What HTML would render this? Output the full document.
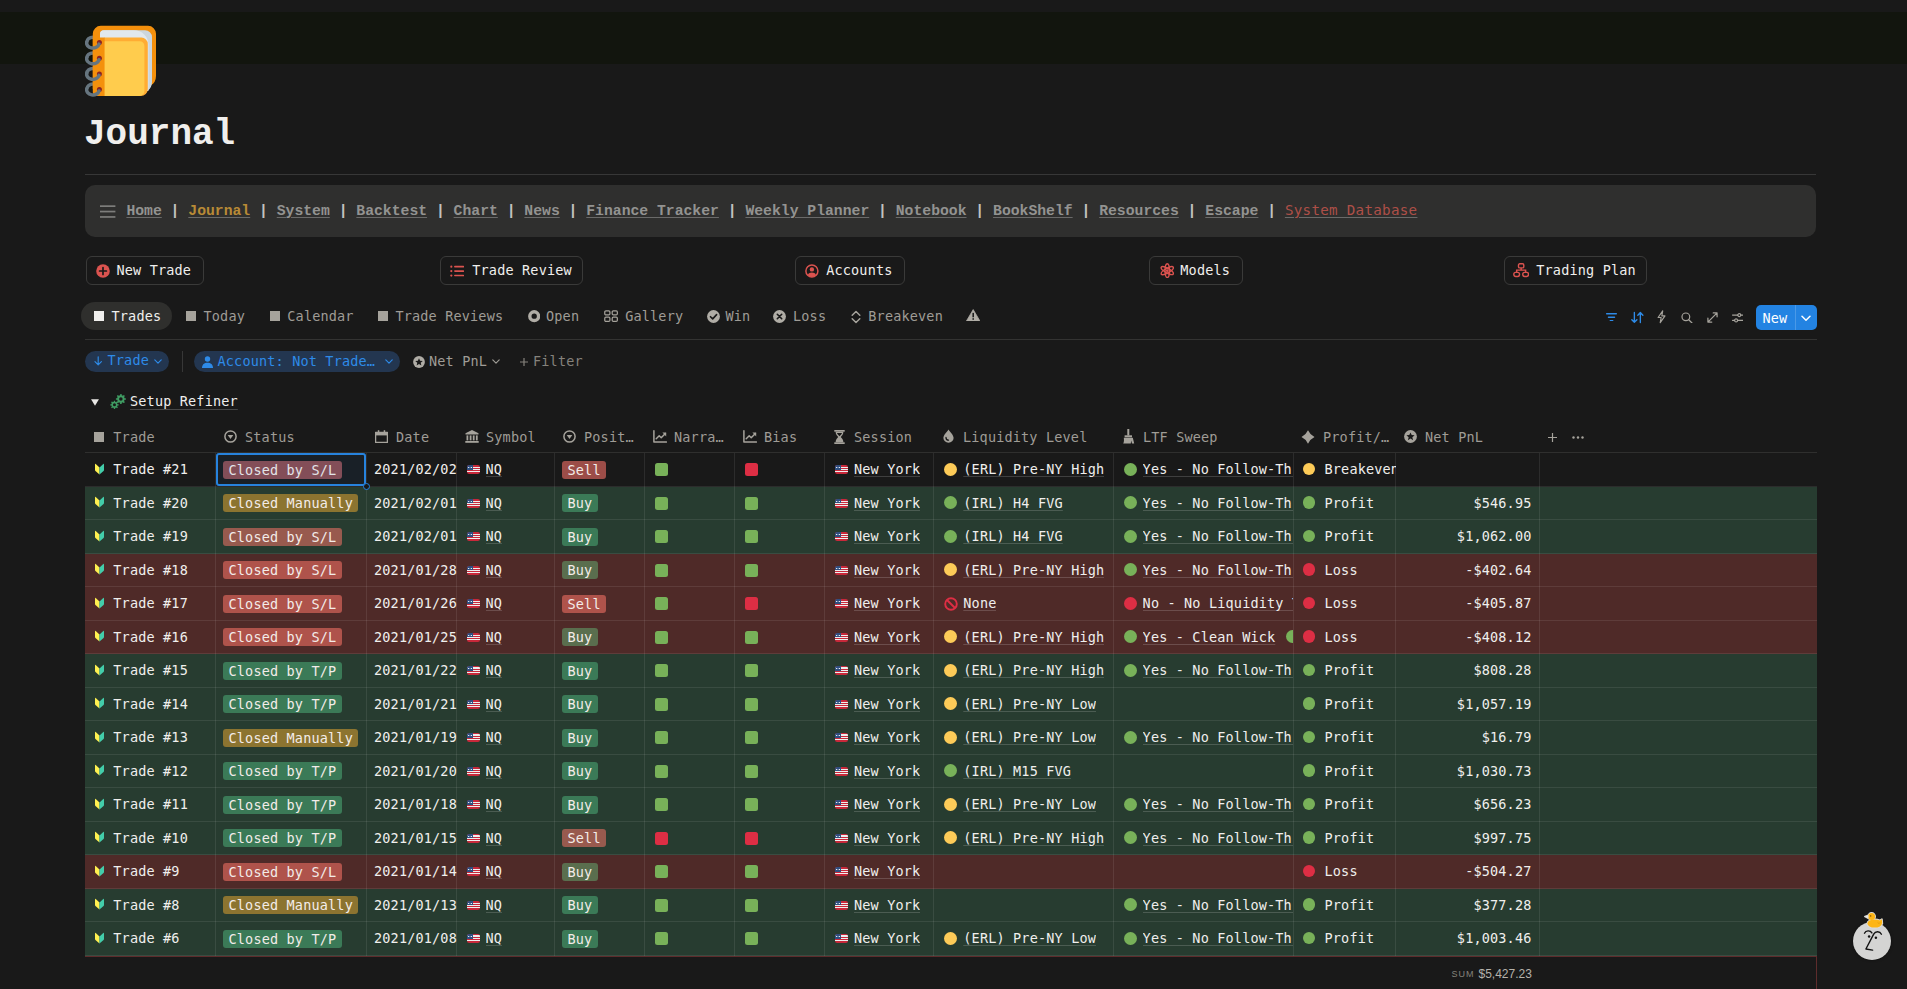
<!DOCTYPE html>
<html lang="en"><head><meta charset="utf-8"><title>Journal</title>
<style>
*{box-sizing:border-box}
html,body{margin:0;padding:0}
body{width:1907px;height:989px;overflow:hidden;position:relative;background:#191919;color:#f0efed;font-family:'DejaVu Sans Mono','Liberation Mono',monospace;font-size:13.5px;line-height:20px;letter-spacing:0.167px}
.abs{position:absolute}
.t{position:absolute;white-space:nowrap;line-height:20px;height:20px}
.cover{left:0;top:12px;width:1907px;height:52px;background:#12150e}
.title{left:84px;top:113px;font-family:'Liberation Mono','DejaVu Sans Mono',monospace;font-weight:bold;font-size:36px;letter-spacing:0;line-height:44px;height:44px;color:#f0efed}
.hr{left:85px;top:174px;width:1731px;height:1px;background:#373737}
.nav{left:85px;top:185px;width:1731px;height:52px;background:#2f2f2e;border-radius:10px}
.navt{left:126.4px;top:199.8px;font-family:'Liberation Mono','DejaVu Sans Mono',monospace;font-weight:bold;font-size:14.742px;letter-spacing:0;color:#c2c2c0}
.navt a{color:#939391;text-decoration:underline;text-decoration-thickness:1px;text-underline-offset:1.8px;text-decoration-color:#6a6a69}
.navt a.y{color:#b88a36}
.navt a.r{color:#ae4f48;font-weight:normal;font-family:'DejaVu Sans Mono','Liberation Mono',monospace;font-size:14.2px;letter-spacing:0.294px}
.btn{position:absolute;top:256px;height:28.5px;border:1px solid #3a3a39;border-radius:6px}
.btn svg{position:absolute;left:10px;top:6px;width:14px;height:14px}
.btn span{position:absolute;left:30.3px;top:2.8px;line-height:20px;white-space:nowrap}
.g{color:#9f9c96}
.tabpill{left:81px;top:302px;width:91px;height:28px;border-radius:14px;background:#2f2f2d}
.line{position:absolute;height:1px;background:#333332}
.pillb{position:absolute;top:351px;height:21px;border-radius:10.5px;background:#233650}
.blue{color:#2e8be8}
.th{color:#9f9c96}
.row{position:absolute;left:85px;width:1731.5px;height:33.5px}
.row.gr{background:#273c30}
.row.rd{background:#4f2a28}
.row .hb{position:absolute;left:0;right:0;bottom:0;height:1px;background:rgba(255,255,255,0.085)}
.vl{position:absolute;top:453px;width:1px;height:503px;background:rgba(255,255,255,0.085)}
.c{position:absolute;top:6.2px;line-height:20px;height:20px;white-space:nowrap;overflow:hidden}
.u{text-decoration:underline;text-decoration-color:rgba(255,255,255,0.17);text-decoration-thickness:1px;text-underline-offset:1.5px}
.tag{position:absolute;top:7.9px;height:18px;line-height:18px;border-radius:3px;padding:0 5.5px;white-space:nowrap;color:#f3ece9}
.tag i{font-style:normal;position:relative;top:0px}
.sq{position:absolute;top:10px;width:13px;height:13px;border-radius:2.5px}
.dot{position:absolute;top:9.6px;width:13.2px;height:13.2px;border-radius:50%}
.dot.p{width:12.5px;height:12.5px;top:9.8px}
.G{background:#78b159} .R{background:#dd2e44} .Y{background:#fdcb58}
.ico{position:absolute}
.fl{position:absolute;top:12px;width:13.2px;height:9px;border-radius:2.2px;overflow:hidden;background:linear-gradient(#c8283a 0 1.5px,#eee 1.5px 2.7px,#c8283a 2.7px 4px,#eee 4px 5px,#c8283a 5px 6.1px,#eee 6.1px 7.3px,#c8283a 7.3px 9px)}
.fl b{position:absolute;left:0;top:0;width:6.3px;height:4.9px;background:radial-gradient(circle at 1.85px 2.4px,#e8e8f0 0 .55px,transparent .7px),radial-gradient(circle at 4.15px 2.4px,#e8e8f0 0 .55px,transparent .7px),#2f4f80}
</style></head>
<body>
<div class="abs cover"></div>
<svg class="abs" style="left:85px;top:25px" width="72" height="72" viewBox="0 0 36 36">
<g fill="none" stroke="#66757F" stroke-width="1.750"><path d="M5 6.10H4A3.1 2.5 0 0 0 .9 8.60"/><path d="M5 13.95H4A3.1 2.5 0 0 0 .9 16.45"/><path d="M5 21.75H4A3.1 2.5 0 0 0 .9 24.25"/><path d="M5 29.55H4A3.1 2.5 0 0 0 .9 32.05"/></g>
<path fill="#F4900C" d="M7.900.400H31.500a4 4 0 0 1 4 4V25.500c0 2.300-1 3.700-2.500 4.600L28 32H3.900V4.400a4 4 0 0 1 4-4z"/>
<path fill="#CCD6DD" d="M9.500 2.600H30a3.500 3.500 0 0 1 3.500 3.500V28.500c0 2-.8 3.300-2 4.200L28 34H7.500V4.600a2 2 0 0 1 2-2z"/>
<path fill="#E1E8ED" d="M9.500 2.600H24.500a7.200 7.200 0 0 1 7.200 7.200V33H7.500V4.600a2 2 0 0 1 2-2z"/>
<path fill="#F4900C" d="M3.900 6.300H10V35.500H5.900a2 2 0 0 1-2-2z"/>
<path fill="#FFAC33" d="M9.840 6.300H28.200a3.200 3.200 0 0 1 3.200 3.200V32a3.500 3.500 0 0 1-3.500 3.500H9.840z"/>
<path fill="#FFCC4D" d="M9.840 8.100H27.300a2.400 2.400 0 0 1 2.400 2.400V33a2.500 2.500 0 0 1-2.500 2.500H9.840z"/>
<g fill="#8A2424"><circle cx="7.2" cy="8.80" r="1.25"/><circle cx="7.2" cy="16.65" r="1.25"/><circle cx="7.2" cy="24.45" r="1.25"/><circle cx="7.2" cy="32.25" r="1.25"/></g>
<g fill="none" stroke="#66757F" stroke-width="1.750" stroke-linecap="round"><path d="M.9 8.50A3.1 2.5 0 0 0 7 9.55"/><path d="M.9 16.35A3.1 2.5 0 0 0 7 17.40"/><path d="M.9 24.15A3.1 2.5 0 0 0 7 25.20"/><path d="M.9 31.95A3.1 2.5 0 0 0 7 33.00"/></g>
</svg>
<div class="t title">Journal</div>
<div class="abs hr"></div>
<div class="abs nav"></div>
<svg class="abs" style="left:99.7px;top:204px" width="17" height="15" viewBox="0 0 17 15"><g fill="#7d7d7b"><rect x="0" y="1.3" width="15.4" height="1.7"/><rect x="0" y="6.7" width="15.4" height="1.7"/><rect x="0" y="12.1" width="15.4" height="1.7"/></g></svg>
<div class="t navt"><a>Home</a> | <a class="y">Journal</a> | <a>System</a> | <a>Backtest</a> | <a>Chart</a> | <a>News</a> | <a>Finance Tracker</a> | <a>Weekly Planner</a> | <a>Notebook</a> | <a>BookShelf</a> | <a>Resources</a> | <a>Escape</a> | <a class="r">System Database</a></div>
<div class="btn" style="left:86.1px;width:117.8px"><svg style="left:9.0px;top:6.9px;width:14px;height:auto" viewBox="0 0 14 14"><circle cx="7" cy="7" r="6.8" fill="#db534f"/><path d="M7 3.6v6.8M3.6 7h6.8" stroke="#191919" stroke-width="1.7" stroke-linecap="round"/></svg><span style="left:29.4px">New Trade</span></div>
<div class="btn" style="left:439.7px;width:142.9px"><svg style="left:9.2px;top:6.9px;width:14.2px;height:auto" viewBox="0 0 14 14"><g fill="#db534f"><circle cx="1.3" cy="2.6" r="1.1"/><circle cx="1.3" cy="7" r="1.1"/><circle cx="1.3" cy="11.4" r="1.1"/><rect x="4" y="1.8" width="10" height="1.6" rx=".8"/><rect x="4" y="6.2" width="10" height="1.6" rx=".8"/><rect x="4" y="10.6" width="10" height="1.6" rx=".8"/></g></svg><span style="left:31.6px">Trade Review</span></div>
<div class="btn" style="left:795px;width:110px"><svg style="left:9.2px;top:6.9px;width:13.8px;height:auto" viewBox="0 0 14 14"><circle cx="7" cy="7" r="6.1" fill="none" stroke="#db534f" stroke-width="1.5"/><circle cx="7" cy="5.5" r="2.2" fill="#db534f"/><path d="M2.8 11.2C3.6 9.3 5.1 8.6 7 8.600s3.400.7 4.200 2.600C10.100 12.500 8.600 13.100 7 13.100S3.900 12.500 2.800 11.200z" fill="#db534f"/></svg><span style="left:30.2px">Accounts</span></div>
<div class="btn" style="left:1149px;width:94.1px"><svg style="left:9.7px;top:6.1px;width:14.5px;height:auto" viewBox="-.5 -.9 15 15.8"><g fill="none" stroke="#db534f" stroke-width="1.5"><ellipse cx="7" cy="7" rx="2.3" ry="7.1"/><ellipse cx="7" cy="7" rx="2.3" ry="7.1" transform="rotate(60 7 7)"/><ellipse cx="7" cy="7" rx="2.3" ry="7.1" transform="rotate(-60 7 7)"/></g><circle cx="7" cy="7" r="1.4" fill="#db534f"/></svg><span style="left:30.3px">Models</span></div>
<div class="btn" style="left:1504.2px;width:142.4px"><svg style="left:7.7px;top:6.4px;width:16.3px;height:auto" viewBox="0 0 16 14"><g fill="none" stroke="#db534f" stroke-width="1.4"><rect x="5.4" y="0.8" width="5.2" height="4" rx="1.2"/><rect x="0.8" y="9.2" width="5.6" height="4" rx="1.8"/><rect x="9.6" y="9.2" width="5.6" height="4" rx="1.8"/><path d="M8 4.800V7M3.600 9.200V7h8.800v2.200"/></g></svg><span style="left:31.1px">Trading Plan</span></div>
<div class="abs tabpill"></div>
<div class="abs" style="left:94px;top:311px;width:10.3px;height:10.3px;background:#f0efed"></div>
<div class="t" style="left:111.5px;top:306.2px;color:#f0efed">Trades</div>
<div class="abs" style="left:185.7px;top:311px;width:10.3px;height:10.3px;background:#a6a39c"></div>
<div class="t g" style="left:203.5px;top:306.2px">Today</div>
<div class="abs" style="left:269.6px;top:311px;width:10.3px;height:10.3px;background:#a6a39c"></div>
<div class="t g" style="left:287.3px;top:306.2px">Calendar</div>
<div class="abs" style="left:377.8px;top:311px;width:10.3px;height:10.3px;background:#a6a39c"></div>
<div class="t g" style="left:395.4px;top:306.2px">Trade Reviews</div>
<svg class="abs" style="left:527.5px;top:310.3px" width="12.4" height="12.4" viewBox="0 0 13 13"><circle cx="6.5" cy="6.5" r="4.6" fill="none" stroke="#b0ada6" stroke-width="3.6"/></svg>
<div class="t g" style="left:546px;top:306.2px">Open</div>
<svg class="abs" style="left:603.7px;top:310.4px" width="14.3" height="12.4" viewBox="0 0 15 13"><g fill="none" stroke="#a6a39c" stroke-width="1.3"><rect x=".8" y=".8" width="5.4" height="4.4" rx="1.2"/><rect x="8.600" y=".8" width="5.4" height="4.4" rx="1.2"/><rect x=".8" y="7.600" width="5.4" height="4.4" rx="1.2"/><rect x="8.600" y="7.600" width="5.4" height="4.4" rx="1.2"/></g></svg>
<div class="t g" style="left:625.2px;top:306.2px">Gallery</div>
<svg class="abs" style="left:706.5px;top:310px" width="13" height="13" viewBox="0 0 13 13"><circle cx="6.5" cy="6.5" r="6.4" fill="#b0ada6"/><path d="M3.500 6.700l2.200 2.200 3.900-4.300" fill="none" stroke="#191919" stroke-width="1.6" stroke-linecap="round" stroke-linejoin="round"/></svg>
<div class="t g" style="left:725.4px;top:306.2px">Win</div>
<svg class="abs" style="left:773.3px;top:310px" width="13" height="13" viewBox="0 0 13 13"><circle cx="6.5" cy="6.5" r="6.4" fill="#b0ada6"/><path d="M4.300 4.300l4.400 4.400M8.700 4.300l-4.400 4.400" fill="none" stroke="#191919" stroke-width="1.6" stroke-linecap="round"/></svg>
<div class="t g" style="left:793px;top:306.2px">Loss</div>
<svg class="abs" style="left:851px;top:309.5px" width="10" height="14" viewBox="0 0 10 14"><path d="M1.200 5.200L5 1.500l3.800 3.700M1.200 8.800L5 12.500l3.800-3.700" fill="none" stroke="#a6a39c" stroke-width="1.5" stroke-linecap="round" stroke-linejoin="round"/></svg>
<div class="t g" style="left:868.3px;top:306.2px">Breakeven</div>
<svg class="abs" style="left:965.7px;top:308.9px" width="14.4" height="12.5" viewBox="0 0 15 13"><path d="M7.500.600L14.500 12.400H.5z" fill="#b0ada6" stroke="#b0ada6" stroke-width=".8" stroke-linejoin="round"/><rect x="6.700" y="4" width="1.600" height="4.600" fill="#191919"/><rect x="6.700" y="9.600" width="1.600" height="1.600" fill="#191919"/></svg>
<svg class="abs" style="left:1605.700px;top:313.100px" width="11" height="8.400" viewBox="0 0 11 8.400"><g fill="#2e8be8"><rect x="0" y="0" width="11" height="1.400" rx=".6"/><rect x="1.800" y="3.500" width="7.400" height="1.400" rx=".6"/><rect x="3.600" y="7" width="3.800" height="1.400" rx=".6"/></g></svg>
<svg class="abs" style="left:1630.700px;top:311px" width="13.100" height="13.100" viewBox="0 0 14 14"><path d="M3.600 1.500v10.500M.9 9.300l2.700 2.800 2.700-2.800M10 12.300V1.800M7.300 4.500L10 1.700l2.700 2.800" fill="none" stroke="#2e8be8" stroke-width="1.450" stroke-linecap="round" stroke-linejoin="round"/></svg>
<svg class="abs" style="left:1657.100px;top:310.400px" width="9.200" height="13.800" viewBox="0 0 10 15"><path d="M6.200 1L1.200 8.200h3.300l-1 5.600 5.200-7.400H5.300z" fill="none" stroke="#a6a39c" stroke-width="1.250" stroke-linejoin="round"/></svg>
<svg class="abs" style="left:1681.300px;top:311.700px" width="11.700" height="11.700" viewBox="0 0 13 13"><circle cx="5.400" cy="5.400" r="4.300" fill="none" stroke="#a6a39c" stroke-width="1.350"/><path d="M8.600 8.600l3.600 3.600" stroke="#a6a39c" stroke-width="1.400" stroke-linecap="round"/></svg>
<svg class="abs" style="left:1706.800px;top:311.700px" width="11" height="11" viewBox="0 0 12 12"><path d="M1 11L11 1M6.800 1H11v4.200M1 6.800V11h4.200" fill="none" stroke="#a6a39c" stroke-width="1.350" stroke-linecap="round" stroke-linejoin="round"/></svg>
<svg class="abs" style="left:1731.700px;top:311.800px" width="11.500" height="11.500" viewBox="0 0 13 13"><g fill="none" stroke="#a6a39c" stroke-width="1.300" stroke-linecap="round"><path d="M.6 3.500h6M10 3.500h2.400M.6 9.500h2.400M6.400 9.500h6"/><circle cx="8.200" cy="3.500" r="1.700"/><circle cx="4.600" cy="9.500" r="1.700"/></g></svg>
<div class="abs" style="left:1756px;top:305px;width:61px;height:25px;border-radius:5px;background:#2383e2"></div>
<div class="abs" style="left:1795px;top:305px;width:1px;height:25px;background:rgba(255,255,255,0.18)"></div>
<div class="t" style="left:1762.5px;top:307.5px;color:#fff;font-family:'DejaVu Sans Mono','Liberation Mono',monospace">New</div>
<svg class="abs" style="left:1801px;top:314.500px" width="10" height="7" viewBox="0 0 10 7"><path d="M1 1.200l4 4 4-4" fill="none" stroke="#fff" stroke-width="1.500" stroke-linecap="round" stroke-linejoin="round"/></svg>
<div class="line" style="left:85px;top:339px;width:1732px"></div>
<div class="pillb" style="left:85px;width:84px"></div>
<svg class="abs" style="left:94.2px;top:356.3px" width="8.4" height="9.8" viewBox="0 0 9 11"><path d="M4.500.800v9M.9 6.400l3.600 3.600 3.600-3.600" fill="none" stroke="#2e8be8" stroke-width="1.300" stroke-linecap="round" stroke-linejoin="round"/></svg>
<div class="t blue" style="left:107.5px;top:349.6px">Trade</div>
<svg class="abs" style="left:153.5px;top:359px" width="8" height="5.4" viewBox="0 0 9 6"><path d="M.9 1l3.600 3.600L8.100 1" fill="none" stroke="#2e8be8" stroke-width="1.300" stroke-linecap="round" stroke-linejoin="round"/></svg>
<div class="abs" style="left:182px;top:351px;width:1px;height:21px;background:#373737"></div>
<div class="pillb" style="left:194px;width:205.700px"></div>
<svg class="abs" style="left:202px;top:355.5px" width="11" height="12" viewBox="0 0 11 12"><circle cx="5.500" cy="3" r="2.700" fill="#2e8be8"/><path d="M0 12C0 8.500 2.400 6.800 5.500 6.800S11 8.500 11 12z" fill="#2e8be8"/></svg>
<div class="t blue" style="left:217.5px;top:350.8px">Account: Not Trade…</div>
<svg class="abs" style="left:384.5px;top:359px" width="8" height="5.4" viewBox="0 0 9 6"><path d="M.9 1l3.600 3.600L8.100 1" fill="none" stroke="#2e8be8" stroke-width="1.300" stroke-linecap="round" stroke-linejoin="round"/></svg>
<svg class="abs" style="left:413px;top:355.500px" width="12" height="12" viewBox="0 0 12 12"><circle cx="6" cy="6" r="5.900" fill="#b0ada6"/><path d="M6 2.200l1.100 2.500 2.700.2-2.100 1.800.7 2.700L6 7.900 3.600 9.400l.7-2.700-2.100-1.800 2.700-.2z" fill="#191919"/></svg>
<div class="t g" style="left:429px;top:351.2px">Net PnL</div>
<svg class="abs" style="left:491.5px;top:359px" width="8" height="5.4" viewBox="0 0 9 6"><path d="M.9 1l3.600 3.600L8.100 1" fill="none" stroke="#9f9c96" stroke-width="1.300" stroke-linecap="round" stroke-linejoin="round"/></svg>
<svg class="abs" style="left:519.500px;top:357.500px" width="8" height="8" viewBox="0 0 8 8"><path d="M4 0v8M0 4h8" stroke="#85827c" stroke-width="1.200"/></svg>
<div class="t" style="left:533px;top:351.2px;color:#85827c">Filter</div>
<svg class="abs" style="left:91px;top:398.800px" width="8" height="7" viewBox="0 0 9 8"><path d="M0 .3h9L4.500 7.600z" fill="#e8e7e4"/></svg>
<svg class="abs" style="left:109.800px;top:394px" width="16.500" height="15.500" viewBox="0 0 17 16"><rect x="10.34" y="0.05" width="1.72" height="2.34" rx="0.39" transform="rotate(0.0 11.2 5.2)" fill="#3f9b62"/><rect x="10.34" y="0.05" width="1.72" height="2.34" rx="0.39" transform="rotate(45.0 11.2 5.2)" fill="#3f9b62"/><rect x="10.34" y="0.05" width="1.72" height="2.34" rx="0.39" transform="rotate(90.0 11.2 5.2)" fill="#3f9b62"/><rect x="10.34" y="0.05" width="1.72" height="2.34" rx="0.39" transform="rotate(135.0 11.2 5.2)" fill="#3f9b62"/><rect x="10.34" y="0.05" width="1.72" height="2.34" rx="0.39" transform="rotate(180.0 11.2 5.2)" fill="#3f9b62"/><rect x="10.34" y="0.05" width="1.72" height="2.34" rx="0.39" transform="rotate(225.0 11.2 5.2)" fill="#3f9b62"/><rect x="10.34" y="0.05" width="1.72" height="2.34" rx="0.39" transform="rotate(270.0 11.2 5.2)" fill="#3f9b62"/><rect x="10.34" y="0.05" width="1.72" height="2.34" rx="0.39" transform="rotate(315.0 11.2 5.2)" fill="#3f9b62"/><circle cx="11.2" cy="5.2" r="2.81" fill="none" stroke="#3f9b62" stroke-width="1.95"/><rect x="3.87" y="6.84" width="1.45" height="1.98" rx="0.33" transform="rotate(0.0 4.6 11.2)" fill="#3f9b62"/><rect x="3.87" y="6.84" width="1.45" height="1.98" rx="0.33" transform="rotate(45.0 4.6 11.2)" fill="#3f9b62"/><rect x="3.87" y="6.84" width="1.45" height="1.98" rx="0.33" transform="rotate(90.0 4.6 11.2)" fill="#3f9b62"/><rect x="3.87" y="6.84" width="1.45" height="1.98" rx="0.33" transform="rotate(135.0 4.6 11.2)" fill="#3f9b62"/><rect x="3.87" y="6.84" width="1.45" height="1.98" rx="0.33" transform="rotate(180.0 4.6 11.2)" fill="#3f9b62"/><rect x="3.87" y="6.84" width="1.45" height="1.98" rx="0.33" transform="rotate(225.0 4.6 11.2)" fill="#3f9b62"/><rect x="3.87" y="6.84" width="1.45" height="1.98" rx="0.33" transform="rotate(270.0 4.6 11.2)" fill="#3f9b62"/><rect x="3.87" y="6.84" width="1.45" height="1.98" rx="0.33" transform="rotate(315.0 4.6 11.2)" fill="#3f9b62"/><circle cx="4.6" cy="11.2" r="2.38" fill="none" stroke="#3f9b62" stroke-width="1.65"/></svg>
<div class="t u" style="left:130px;top:391px;text-decoration-color:rgba(255,255,255,0.2);text-underline-offset:2.700px">Setup Refiner</div>
<div class="abs" style="left:94.3px;top:431.8px;width:10px;height:10px;background:#a6a39c"></div>
<div class="t th" style="left:113.3px;top:426.8px">Trade</div>
<svg class="abs" style="left:223.5px;top:430.2px" width="13" height="13" viewBox="0 0 13 13"><circle cx="6.500" cy="6.500" r="5.600" fill="none" stroke="#a6a39c" stroke-width="1.500"/><path d="M3.700 4.900h5.600L6.500 9.100z" fill="#a6a39c"/></svg>
<div class="t th" style="left:245.0px;top:426.8px">Status</div>
<svg class="abs" style="left:374.5px;top:429.7px" width="13" height="13" viewBox="0 0 13 13"><path d="M.6 2.400h11.800v10H.6z" fill="none" stroke="#a6a39c" stroke-width="1.300" stroke-linejoin="round"/><rect x=".6" y="2.400" width="11.800" height="3" fill="#a6a39c"/><rect x="2.800" y=".2" width="1.500" height="2.600" fill="#a6a39c"/><rect x="8.700" y=".2" width="1.500" height="2.600" fill="#a6a39c"/></svg>
<div class="t th" style="left:396.0px;top:426.8px">Date</div>
<svg class="abs" style="left:464.5px;top:429.7px" width="14" height="13" viewBox="0 0 14 13"><g fill="#a6a39c"><path d="M7 0l6.500 3.200v1.400H.5V3.200z"/><rect x="1.500" y="5.400" width="1.800" height="5"/><rect x="4.700" y="5.400" width="1.800" height="5"/><rect x="7.800" y="5.400" width="1.800" height="5"/><rect x="10.900" y="5.400" width="1.800" height="5"/><rect x=".3" y="11" width="13.400" height="1.800"/></g></svg>
<div class="t th" style="left:486.0px;top:426.8px">Symbol</div>
<svg class="abs" style="left:562.5px;top:430.2px" width="13" height="13" viewBox="0 0 13 13"><circle cx="6.500" cy="6.500" r="5.600" fill="none" stroke="#a6a39c" stroke-width="1.500"/><path d="M3.700 4.900h5.600L6.500 9.100z" fill="#a6a39c"/></svg>
<div class="t th" style="left:584.0px;top:426.8px">Posit…</div>
<svg class="abs" style="left:652.5px;top:430.2px" width="14" height="13" viewBox="0 0 14 13"><path d="M.9.800v11.300h12.500" fill="none" stroke="#a6a39c" stroke-width="1.500" stroke-linecap="round" stroke-linejoin="round"/><path d="M3.200 8.800l3-3 2 2 4.200-4.300" fill="none" stroke="#a6a39c" stroke-width="1.500" stroke-linecap="round" stroke-linejoin="round"/><path d="M9.400 2.600h3.800v3.800z" fill="#a6a39c"/></svg>
<div class="t th" style="left:674.0px;top:426.8px">Narra…</div>
<svg class="abs" style="left:742.5px;top:430.2px" width="14" height="13" viewBox="0 0 14 13"><path d="M.9.800v11.300h12.500" fill="none" stroke="#a6a39c" stroke-width="1.500" stroke-linecap="round" stroke-linejoin="round"/><path d="M3.200 8.800l3-3 2 2 4.200-4.300" fill="none" stroke="#a6a39c" stroke-width="1.500" stroke-linecap="round" stroke-linejoin="round"/><path d="M9.400 2.600h3.800v3.800z" fill="#a6a39c"/></svg>
<div class="t th" style="left:764.0px;top:426.8px">Bias</div>
<svg class="abs" style="left:833.5px;top:429.7px" width="11" height="14" viewBox="0 0 11 14"><g fill="#a6a39c"><rect x=".3" y="0" width="10.400" height="1.700"/><rect x=".3" y="12.300" width="10.400" height="1.700"/><path d="M1.600 1.700h7.800c0 2.800-1.700 4-2.600 5.300.9 1.300 2.600 2.500 2.600 5.300H1.600c0-2.800 1.700-4 2.600-5.300C3.300 5.700 1.600 4.500 1.600 1.700zM3 3c.4 1.300 1.600 2.200 2.500 3.300C6.400 5.200 7.600 4.300 8 3z" fill-rule="evenodd"/></g></svg>
<div class="t th" style="left:854.0px;top:426.8px">Session</div>
<svg class="abs" style="left:943.0px;top:429.2px" width="11" height="14" viewBox="0 0 11 14"><path d="M5.500.400C7.500 3.500 10.600 6 10.600 8.900a5.100 4.800 0 0 1-10.200 0C.4 6 3.500 3.500 5.500.400z" fill="#a6a39c"/><path d="M3 8.400c0 1.700 1 2.800 2.500 2.800" fill="none" stroke="#191919" stroke-width="1.300" stroke-linecap="round"/></svg>
<div class="t th" style="left:963.0px;top:426.8px">Liquidity Level</div>
<svg class="abs" style="left:1121.5px;top:429.2px" width="13" height="15" viewBox="0 0 13 15"><g fill="#a6a39c"><rect x="5.300" y="0" width="2" height="6.500"/><rect x="2.600" y="6.300" width="7.400" height="2"/><path d="M1.800 8.800h9l1.400 5.800h-2.200l-.8-3-.4 3H1.200c1-1.700.8-3.700.6-5.800z"/></g></svg>
<div class="t th" style="left:1143.0px;top:426.8px">LTF Sweep</div>
<svg class="abs" style="left:1301.0px;top:429.7px" width="14" height="14" viewBox="0 0 14 14"><path d="M7 .3Q9 4.800 13.500 7 9 9.200 7 13.700 5 9.200 .5 7 5 4.800 7 .3z" fill="#a6a39c"/></svg>
<div class="t th" style="left:1323.0px;top:426.8px">Profit/…</div>
<svg class="abs" style="left:1403.5px;top:430.2px" width="13" height="13" viewBox="0 0 12 12"><circle cx="6" cy="6" r="5.900" fill="#a6a39c"/><path d="M6 2.200l1.100 2.500 2.700.2-2.100 1.800.7 2.700L6 7.900 3.600 9.400l.7-2.700-2.100-1.800 2.700-.2z" fill="#191919"/></svg>
<div class="t th" style="left:1425.0px;top:426.8px">Net PnL</div>
<svg class="abs" style="left:1547.500px;top:433px" width="9" height="9" viewBox="0 0 9 9"><path d="M4.500 0v9M0 4.500h9" stroke="#a6a39c" stroke-width="1.200"/></svg>
<svg class="abs" style="left:1572px;top:436px" width="12" height="3" viewBox="0 0 12 3"><g fill="#a6a39c"><circle cx="1.500" cy="1.500" r="1.200"/><circle cx="6" cy="1.500" r="1.200"/><circle cx="10.500" cy="1.500" r="1.200"/></g></svg>
<div class="line" style="left:85px;top:451.500px;width:1732px;background:#2f2f2e"></div>
<div class="row " style="top:453.0px"><div class="hb"></div><svg class="ico" style="left:10px;top:9.800px" width="9" height="12.400" viewBox="0 0 10 12"><path d="M0 .6C0 .1.4-.1.8.2L5 4v8L.5 8.100C.2 7.800 0 7.500 0 7z" fill="#fff050"/><path d="M10 .6c0-.5-.4-.7-.8-.4L5 4v8l4.500-3.900c.3-.3.5-.6.5-1.100z" fill="#43cdaa"/></svg><div class="c" style="left:28.300px">Trade #21</div><div class="tag" style="left:138px;background:#8b4b4e"><i>Closed by S/L</i></div><div class="c" style="left:289px;width:82.500px">2021/02/02</div><div class="fl" style="left:381.9px"><b></b></div><div class="c u" style="left:400.500px">NQ</div><div class="tag" style="left:477px;background:#9c4d48"><i>Sell</i></div><div class="sq G" style="left:570px"></div><div class="sq R" style="left:660px"></div><div class="fl" style="left:750px"><b></b></div><div class="c u" style="left:769px">New York</div><div class="dot Y" style="left:858.500px"></div><div class="c u" style="left:878.300px">(ERL) Pre-NY High</div><div class="dot G" style="left:1038.800px"></div><div class="c u" style="left:1057.600px;width:150.900px">Yes - No Follow-Through</div><div class="dot p Y" style="left:1217.700px"></div><div class="c" style="left:1239.500px;width:71px">Breakeven</div></div>
<div class="row gr" style="top:486.5px"><div class="hb"></div><svg class="ico" style="left:10px;top:9.800px" width="9" height="12.400" viewBox="0 0 10 12"><path d="M0 .6C0 .1.4-.1.8.2L5 4v8L.5 8.100C.2 7.800 0 7.500 0 7z" fill="#fff050"/><path d="M10 .6c0-.5-.4-.7-.8-.4L5 4v8l4.500-3.900c.3-.3.5-.6.5-1.100z" fill="#43cdaa"/></svg><div class="c" style="left:28.300px">Trade #20</div><div class="tag" style="left:138px;background:#8c7430"><i>Closed Manually</i></div><div class="c" style="left:289px;width:82.500px">2021/02/01</div><div class="fl" style="left:381.9px"><b></b></div><div class="c u" style="left:400.500px">NQ</div><div class="tag" style="left:477px;background:#3b7a57"><i>Buy</i></div><div class="sq G" style="left:570px"></div><div class="sq G" style="left:660px"></div><div class="fl" style="left:750px"><b></b></div><div class="c u" style="left:769px">New York</div><div class="dot G" style="left:858.500px"></div><div class="c u" style="left:878.300px">(IRL) H4 FVG</div><div class="dot G" style="left:1038.800px"></div><div class="c u" style="left:1057.600px;width:150.900px">Yes - No Follow-Through</div><div class="dot p G" style="left:1217.700px"></div><div class="c" style="left:1239.500px;width:71px">Profit</div><div class="c" style="right:285px">$546.95</div></div>
<div class="row gr" style="top:520.0px"><div class="hb"></div><svg class="ico" style="left:10px;top:9.800px" width="9" height="12.400" viewBox="0 0 10 12"><path d="M0 .6C0 .1.4-.1.8.2L5 4v8L.5 8.100C.2 7.800 0 7.500 0 7z" fill="#fff050"/><path d="M10 .6c0-.5-.4-.7-.8-.4L5 4v8l4.500-3.900c.3-.3.5-.6.5-1.100z" fill="#43cdaa"/></svg><div class="c" style="left:28.300px">Trade #19</div><div class="tag" style="left:138px;background:#985a4e"><i>Closed by S/L</i></div><div class="c" style="left:289px;width:82.500px">2021/02/01</div><div class="fl" style="left:381.9px"><b></b></div><div class="c u" style="left:400.500px">NQ</div><div class="tag" style="left:477px;background:#3b7a57"><i>Buy</i></div><div class="sq G" style="left:570px"></div><div class="sq G" style="left:660px"></div><div class="fl" style="left:750px"><b></b></div><div class="c u" style="left:769px">New York</div><div class="dot G" style="left:858.500px"></div><div class="c u" style="left:878.300px">(IRL) H4 FVG</div><div class="dot G" style="left:1038.800px"></div><div class="c u" style="left:1057.600px;width:150.900px">Yes - No Follow-Through</div><div class="dot p G" style="left:1217.700px"></div><div class="c" style="left:1239.500px;width:71px">Profit</div><div class="c" style="right:285px">$1,062.00</div></div>
<div class="row rd" style="top:553.5px"><div class="hb"></div><svg class="ico" style="left:10px;top:9.800px" width="9" height="12.400" viewBox="0 0 10 12"><path d="M0 .6C0 .1.4-.1.8.2L5 4v8L.5 8.100C.2 7.800 0 7.500 0 7z" fill="#fff050"/><path d="M10 .6c0-.5-.4-.7-.8-.4L5 4v8l4.500-3.900c.3-.3.5-.6.5-1.100z" fill="#43cdaa"/></svg><div class="c" style="left:28.300px">Trade #18</div><div class="tag" style="left:138px;background:#af534b"><i>Closed by S/L</i></div><div class="c" style="left:289px;width:82.500px">2021/01/28</div><div class="fl" style="left:381.9px"><b></b></div><div class="c u" style="left:400.500px">NQ</div><div class="tag" style="left:477px;background:#5a6e4e"><i>Buy</i></div><div class="sq G" style="left:570px"></div><div class="sq G" style="left:660px"></div><div class="fl" style="left:750px"><b></b></div><div class="c u" style="left:769px">New York</div><div class="dot Y" style="left:858.500px"></div><div class="c u" style="left:878.300px">(ERL) Pre-NY High</div><div class="dot G" style="left:1038.800px"></div><div class="c u" style="left:1057.600px;width:150.900px">Yes - No Follow-Through</div><div class="dot p R" style="left:1217.700px"></div><div class="c" style="left:1239.500px;width:71px">Loss</div><div class="c" style="right:285px">-$402.64</div></div>
<div class="row rd" style="top:587.0px"><div class="hb"></div><svg class="ico" style="left:10px;top:9.800px" width="9" height="12.400" viewBox="0 0 10 12"><path d="M0 .6C0 .1.4-.1.8.2L5 4v8L.5 8.100C.2 7.800 0 7.500 0 7z" fill="#fff050"/><path d="M10 .6c0-.5-.4-.7-.8-.4L5 4v8l4.500-3.900c.3-.3.5-.6.5-1.100z" fill="#43cdaa"/></svg><div class="c" style="left:28.300px">Trade #17</div><div class="tag" style="left:138px;background:#af534b"><i>Closed by S/L</i></div><div class="c" style="left:289px;width:82.500px">2021/01/26</div><div class="fl" style="left:381.9px"><b></b></div><div class="c u" style="left:400.500px">NQ</div><div class="tag" style="left:477px;background:#af534b"><i>Sell</i></div><div class="sq G" style="left:570px"></div><div class="sq R" style="left:660px"></div><div class="fl" style="left:750px"><b></b></div><div class="c u" style="left:769px">New York</div><svg class="ico" style="left:858.5px;top:9.500px" width="14" height="14" viewBox="0 0 14 14"><circle cx="7" cy="7" r="5.800" fill="none" stroke="#dd2e44" stroke-width="1.900"/><path d="M3 3l8 8" stroke="#dd2e44" stroke-width="1.900"/></svg><div class="c u" style="left:878.300px">None</div><div class="dot R" style="left:1038.800px"></div><div class="c u" style="left:1057.600px;width:150.900px">No - No Liquidity Taken</div><div class="dot p R" style="left:1217.700px"></div><div class="c" style="left:1239.500px;width:71px">Loss</div><div class="c" style="right:285px">-$405.87</div></div>
<div class="row rd" style="top:620.5px"><div class="hb"></div><svg class="ico" style="left:10px;top:9.800px" width="9" height="12.400" viewBox="0 0 10 12"><path d="M0 .6C0 .1.4-.1.8.2L5 4v8L.5 8.100C.2 7.800 0 7.500 0 7z" fill="#fff050"/><path d="M10 .6c0-.5-.4-.7-.8-.4L5 4v8l4.500-3.900c.3-.3.5-.6.5-1.100z" fill="#43cdaa"/></svg><div class="c" style="left:28.300px">Trade #16</div><div class="tag" style="left:138px;background:#af534b"><i>Closed by S/L</i></div><div class="c" style="left:289px;width:82.500px">2021/01/25</div><div class="fl" style="left:381.9px"><b></b></div><div class="c u" style="left:400.500px">NQ</div><div class="tag" style="left:477px;background:#5a6e4e"><i>Buy</i></div><div class="sq G" style="left:570px"></div><div class="sq G" style="left:660px"></div><div class="fl" style="left:750px"><b></b></div><div class="c u" style="left:769px">New York</div><div class="dot Y" style="left:858.500px"></div><div class="c u" style="left:878.300px">(ERL) Pre-NY High</div><div class="dot G" style="left:1038.800px"></div><div class="c u" style="left:1057.600px;width:150.900px">Yes - Clean Wick</div><div style="position:absolute;left:1201.100px;top:0;width:7.400px;height:33px;overflow:hidden"><div class="dot G" style="left:0"></div></div><div class="dot p R" style="left:1217.700px"></div><div class="c" style="left:1239.500px;width:71px">Loss</div><div class="c" style="right:285px">-$408.12</div></div>
<div class="row gr" style="top:654.0px"><div class="hb"></div><svg class="ico" style="left:10px;top:9.800px" width="9" height="12.400" viewBox="0 0 10 12"><path d="M0 .6C0 .1.4-.1.8.2L5 4v8L.5 8.100C.2 7.800 0 7.500 0 7z" fill="#fff050"/><path d="M10 .6c0-.5-.4-.7-.8-.4L5 4v8l4.500-3.900c.3-.3.5-.6.5-1.100z" fill="#43cdaa"/></svg><div class="c" style="left:28.300px">Trade #15</div><div class="tag" style="left:138px;background:#3b7a57"><i>Closed by T/P</i></div><div class="c" style="left:289px;width:82.500px">2021/01/22</div><div class="fl" style="left:381.9px"><b></b></div><div class="c u" style="left:400.500px">NQ</div><div class="tag" style="left:477px;background:#3b7a57"><i>Buy</i></div><div class="sq G" style="left:570px"></div><div class="sq G" style="left:660px"></div><div class="fl" style="left:750px"><b></b></div><div class="c u" style="left:769px">New York</div><div class="dot Y" style="left:858.500px"></div><div class="c u" style="left:878.300px">(ERL) Pre-NY High</div><div class="dot G" style="left:1038.800px"></div><div class="c u" style="left:1057.600px;width:150.900px">Yes - No Follow-Through</div><div class="dot p G" style="left:1217.700px"></div><div class="c" style="left:1239.500px;width:71px">Profit</div><div class="c" style="right:285px">$808.28</div></div>
<div class="row gr" style="top:687.5px"><div class="hb"></div><svg class="ico" style="left:10px;top:9.800px" width="9" height="12.400" viewBox="0 0 10 12"><path d="M0 .6C0 .1.4-.1.8.2L5 4v8L.5 8.100C.2 7.800 0 7.500 0 7z" fill="#fff050"/><path d="M10 .6c0-.5-.4-.7-.8-.4L5 4v8l4.500-3.900c.3-.3.5-.6.5-1.100z" fill="#43cdaa"/></svg><div class="c" style="left:28.300px">Trade #14</div><div class="tag" style="left:138px;background:#3b7a57"><i>Closed by T/P</i></div><div class="c" style="left:289px;width:82.500px">2021/01/21</div><div class="fl" style="left:381.9px"><b></b></div><div class="c u" style="left:400.500px">NQ</div><div class="tag" style="left:477px;background:#3b7a57"><i>Buy</i></div><div class="sq G" style="left:570px"></div><div class="sq G" style="left:660px"></div><div class="fl" style="left:750px"><b></b></div><div class="c u" style="left:769px">New York</div><div class="dot Y" style="left:858.500px"></div><div class="c u" style="left:878.300px">(ERL) Pre-NY Low</div><div class="dot p G" style="left:1217.700px"></div><div class="c" style="left:1239.500px;width:71px">Profit</div><div class="c" style="right:285px">$1,057.19</div></div>
<div class="row gr" style="top:721.0px"><div class="hb"></div><svg class="ico" style="left:10px;top:9.800px" width="9" height="12.400" viewBox="0 0 10 12"><path d="M0 .6C0 .1.4-.1.8.2L5 4v8L.5 8.100C.2 7.800 0 7.500 0 7z" fill="#fff050"/><path d="M10 .6c0-.5-.4-.7-.8-.4L5 4v8l4.500-3.900c.3-.3.5-.6.5-1.100z" fill="#43cdaa"/></svg><div class="c" style="left:28.300px">Trade #13</div><div class="tag" style="left:138px;background:#8c7430"><i>Closed Manually</i></div><div class="c" style="left:289px;width:82.500px">2021/01/19</div><div class="fl" style="left:381.9px"><b></b></div><div class="c u" style="left:400.500px">NQ</div><div class="tag" style="left:477px;background:#3b7a57"><i>Buy</i></div><div class="sq G" style="left:570px"></div><div class="sq G" style="left:660px"></div><div class="fl" style="left:750px"><b></b></div><div class="c u" style="left:769px">New York</div><div class="dot Y" style="left:858.500px"></div><div class="c u" style="left:878.300px">(ERL) Pre-NY Low</div><div class="dot G" style="left:1038.800px"></div><div class="c u" style="left:1057.600px;width:150.900px">Yes - No Follow-Through</div><div class="dot p G" style="left:1217.700px"></div><div class="c" style="left:1239.500px;width:71px">Profit</div><div class="c" style="right:285px">$16.79</div></div>
<div class="row gr" style="top:754.5px"><div class="hb"></div><svg class="ico" style="left:10px;top:9.800px" width="9" height="12.400" viewBox="0 0 10 12"><path d="M0 .6C0 .1.4-.1.8.2L5 4v8L.5 8.100C.2 7.800 0 7.500 0 7z" fill="#fff050"/><path d="M10 .6c0-.5-.4-.7-.8-.4L5 4v8l4.500-3.900c.3-.3.5-.6.5-1.100z" fill="#43cdaa"/></svg><div class="c" style="left:28.300px">Trade #12</div><div class="tag" style="left:138px;background:#3b7a57"><i>Closed by T/P</i></div><div class="c" style="left:289px;width:82.500px">2021/01/20</div><div class="fl" style="left:381.9px"><b></b></div><div class="c u" style="left:400.500px">NQ</div><div class="tag" style="left:477px;background:#3b7a57"><i>Buy</i></div><div class="sq G" style="left:570px"></div><div class="sq G" style="left:660px"></div><div class="fl" style="left:750px"><b></b></div><div class="c u" style="left:769px">New York</div><div class="dot G" style="left:858.500px"></div><div class="c u" style="left:878.300px">(IRL) M15 FVG</div><div class="dot p G" style="left:1217.700px"></div><div class="c" style="left:1239.500px;width:71px">Profit</div><div class="c" style="right:285px">$1,030.73</div></div>
<div class="row gr" style="top:788.0px"><div class="hb"></div><svg class="ico" style="left:10px;top:9.800px" width="9" height="12.400" viewBox="0 0 10 12"><path d="M0 .6C0 .1.4-.1.8.2L5 4v8L.5 8.100C.2 7.800 0 7.500 0 7z" fill="#fff050"/><path d="M10 .6c0-.5-.4-.7-.8-.4L5 4v8l4.500-3.900c.3-.3.5-.6.5-1.100z" fill="#43cdaa"/></svg><div class="c" style="left:28.300px">Trade #11</div><div class="tag" style="left:138px;background:#3b7a57"><i>Closed by T/P</i></div><div class="c" style="left:289px;width:82.500px">2021/01/18</div><div class="fl" style="left:381.9px"><b></b></div><div class="c u" style="left:400.500px">NQ</div><div class="tag" style="left:477px;background:#3b7a57"><i>Buy</i></div><div class="sq G" style="left:570px"></div><div class="sq G" style="left:660px"></div><div class="fl" style="left:750px"><b></b></div><div class="c u" style="left:769px">New York</div><div class="dot Y" style="left:858.500px"></div><div class="c u" style="left:878.300px">(ERL) Pre-NY Low</div><div class="dot G" style="left:1038.800px"></div><div class="c u" style="left:1057.600px;width:150.900px">Yes - No Follow-Through</div><div class="dot p G" style="left:1217.700px"></div><div class="c" style="left:1239.500px;width:71px">Profit</div><div class="c" style="right:285px">$656.23</div></div>
<div class="row gr" style="top:821.5px"><div class="hb"></div><svg class="ico" style="left:10px;top:9.800px" width="9" height="12.400" viewBox="0 0 10 12"><path d="M0 .6C0 .1.4-.1.8.2L5 4v8L.5 8.100C.2 7.800 0 7.500 0 7z" fill="#fff050"/><path d="M10 .6c0-.5-.4-.7-.8-.4L5 4v8l4.500-3.900c.3-.3.5-.6.5-1.100z" fill="#43cdaa"/></svg><div class="c" style="left:28.300px">Trade #10</div><div class="tag" style="left:138px;background:#3b7a57"><i>Closed by T/P</i></div><div class="c" style="left:289px;width:82.500px">2021/01/15</div><div class="fl" style="left:381.9px"><b></b></div><div class="c u" style="left:400.500px">NQ</div><div class="tag" style="left:477px;background:#985a4e"><i>Sell</i></div><div class="sq R" style="left:570px"></div><div class="sq R" style="left:660px"></div><div class="fl" style="left:750px"><b></b></div><div class="c u" style="left:769px">New York</div><div class="dot Y" style="left:858.500px"></div><div class="c u" style="left:878.300px">(ERL) Pre-NY High</div><div class="dot G" style="left:1038.800px"></div><div class="c u" style="left:1057.600px;width:150.900px">Yes - No Follow-Through</div><div class="dot p G" style="left:1217.700px"></div><div class="c" style="left:1239.500px;width:71px">Profit</div><div class="c" style="right:285px">$997.75</div></div>
<div class="row rd" style="top:855.0px"><div class="hb"></div><svg class="ico" style="left:10px;top:9.800px" width="9" height="12.400" viewBox="0 0 10 12"><path d="M0 .6C0 .1.4-.1.8.2L5 4v8L.5 8.100C.2 7.800 0 7.500 0 7z" fill="#fff050"/><path d="M10 .6c0-.5-.4-.7-.8-.4L5 4v8l4.500-3.900c.3-.3.5-.6.5-1.100z" fill="#43cdaa"/></svg><div class="c" style="left:28.300px">Trade #9</div><div class="tag" style="left:138px;background:#af534b"><i>Closed by S/L</i></div><div class="c" style="left:289px;width:82.500px">2021/01/14</div><div class="fl" style="left:381.9px"><b></b></div><div class="c u" style="left:400.500px">NQ</div><div class="tag" style="left:477px;background:#5a6e4e"><i>Buy</i></div><div class="sq G" style="left:570px"></div><div class="sq G" style="left:660px"></div><div class="fl" style="left:750px"><b></b></div><div class="c u" style="left:769px">New York</div><div class="dot p R" style="left:1217.700px"></div><div class="c" style="left:1239.500px;width:71px">Loss</div><div class="c" style="right:285px">-$504.27</div></div>
<div class="row gr" style="top:888.5px"><div class="hb"></div><svg class="ico" style="left:10px;top:9.800px" width="9" height="12.400" viewBox="0 0 10 12"><path d="M0 .6C0 .1.4-.1.8.2L5 4v8L.5 8.100C.2 7.800 0 7.500 0 7z" fill="#fff050"/><path d="M10 .6c0-.5-.4-.7-.8-.4L5 4v8l4.500-3.900c.3-.3.5-.6.5-1.100z" fill="#43cdaa"/></svg><div class="c" style="left:28.300px">Trade #8</div><div class="tag" style="left:138px;background:#8c7430"><i>Closed Manually</i></div><div class="c" style="left:289px;width:82.500px">2021/01/13</div><div class="fl" style="left:381.9px"><b></b></div><div class="c u" style="left:400.500px">NQ</div><div class="tag" style="left:477px;background:#3b7a57"><i>Buy</i></div><div class="sq G" style="left:570px"></div><div class="sq G" style="left:660px"></div><div class="fl" style="left:750px"><b></b></div><div class="c u" style="left:769px">New York</div><div class="dot G" style="left:1038.800px"></div><div class="c u" style="left:1057.600px;width:150.900px">Yes - No Follow-Through</div><div class="dot p G" style="left:1217.700px"></div><div class="c" style="left:1239.500px;width:71px">Profit</div><div class="c" style="right:285px">$377.28</div></div>
<div class="row gr" style="top:922.0px"><div class="hb"></div><svg class="ico" style="left:10px;top:9.800px" width="9" height="12.400" viewBox="0 0 10 12"><path d="M0 .6C0 .1.4-.1.8.2L5 4v8L.5 8.100C.2 7.800 0 7.500 0 7z" fill="#fff050"/><path d="M10 .6c0-.5-.4-.7-.8-.4L5 4v8l4.500-3.900c.3-.3.5-.6.5-1.100z" fill="#43cdaa"/></svg><div class="c" style="left:28.300px">Trade #6</div><div class="tag" style="left:138px;background:#3b7a57"><i>Closed by T/P</i></div><div class="c" style="left:289px;width:82.500px">2021/01/08</div><div class="fl" style="left:381.9px"><b></b></div><div class="c u" style="left:400.500px">NQ</div><div class="tag" style="left:477px;background:#3b7a57"><i>Buy</i></div><div class="sq G" style="left:570px"></div><div class="sq G" style="left:660px"></div><div class="fl" style="left:750px"><b></b></div><div class="c u" style="left:769px">New York</div><div class="dot Y" style="left:858.500px"></div><div class="c u" style="left:878.300px">(ERL) Pre-NY Low</div><div class="dot G" style="left:1038.800px"></div><div class="c u" style="left:1057.600px;width:150.900px">Yes - No Follow-Through</div><div class="dot p G" style="left:1217.700px"></div><div class="c" style="left:1239.500px;width:71px">Profit</div><div class="c" style="right:285px">$1,003.46</div></div>
<div class="vl" style="left:215.0px"></div>
<div class="vl" style="left:366.0px"></div>
<div class="vl" style="left:456.0px"></div>
<div class="vl" style="left:554.0px"></div>
<div class="vl" style="left:644.0px"></div>
<div class="vl" style="left:734.0px"></div>
<div class="vl" style="left:824.0px"></div>
<div class="vl" style="left:933.0px"></div>
<div class="vl" style="left:1113.0px"></div>
<div class="vl" style="left:1293.0px"></div>
<div class="vl" style="left:1395.0px"></div>
<div class="vl" style="left:1539.0px"></div>
<div class="abs" style="left:216px;top:453px;width:150px;height:33px;border:2px solid #2783de;border-radius:3px;background:rgba(35,131,226,0.07)"></div>
<div class="abs" style="left:362.500px;top:482.500px;width:7px;height:7px;border-radius:50%;background:#191919;border:1.300px solid #2783de"></div>
<div class="line" style="left:85px;top:956px;width:1732px;background:#5e2c2c"></div>
<div class="abs" style="left:1816px;top:956px;width:1px;height:33px;background:#5e2c2c"></div>
<div class="t" style="left:1451.500px;top:964px;font-family:'Liberation Sans','DejaVu Sans',sans-serif;font-size:9px;letter-spacing:1px;color:#85827c">SUM</div>
<div class="t" style="left:1478.500px;top:963.500px;font-family:'Liberation Sans','DejaVu Sans',sans-serif;font-size:12px;letter-spacing:0;color:#b5b2ab">$5,427.23</div>
<div class="abs" style="left:1853px;top:922px;width:38px;height:38px;border-radius:50%;background:#d4d4d3;box-shadow:0 0 3px rgba(0,0,0,0.5)"></div>
<svg class="abs" style="left:1853px;top:922px" width="38" height="38" viewBox="0 0 38 38"><g fill="none" stroke="#141414" stroke-width="1.400" stroke-linecap="round" stroke-linejoin="round"><path d="M11.500 11.200C12.800 8.300 17.200 8 18.900 10.900"/><path d="M28.400 12.200C26.800 9 22.500 8.800 20.700 12.200L12.900 27l6.700 1.100"/></g><circle cx="16.100" cy="14.400" r="1.250" fill="#141414"/><circle cx="22.900" cy="15.700" r="1.250" fill="#141414"/></svg>
<svg class="abs" style="left:1863px;top:910px" width="22" height="19" viewBox="0 0 22 19"><g fill="#dcdcdc" stroke="#dcdcdc" stroke-width="1.800" stroke-linejoin="round"><circle cx="8.600" cy="6.500" r="3.500"/><ellipse cx="11.700" cy="13.500" rx="7.300" ry="4.100"/><path d="M15.500 11.500L18.900 9.300l.4 4.200z"/><path d="M5.600 5.400L1.900 6.500l3.500 1.600z"/></g><g fill="#fdb515"><circle cx="8.600" cy="6.500" r="3.500"/><ellipse cx="11.700" cy="13.500" rx="7.300" ry="4.100"/><path d="M15.500 11.500L18.900 9.300l.4 4.200z"/></g><path d="M5.600 5.600L2.300 6.600l3.100 1.300z" fill="#e9e9e9"/><circle cx="7.700" cy="5.900" r=".65" fill="#5a3d08"/><path d="M14.500 12.300l1.600 1.400 1.200-1.500" fill="none" stroke="#e09a0c" stroke-width=".7"/></svg>
</body></html>
